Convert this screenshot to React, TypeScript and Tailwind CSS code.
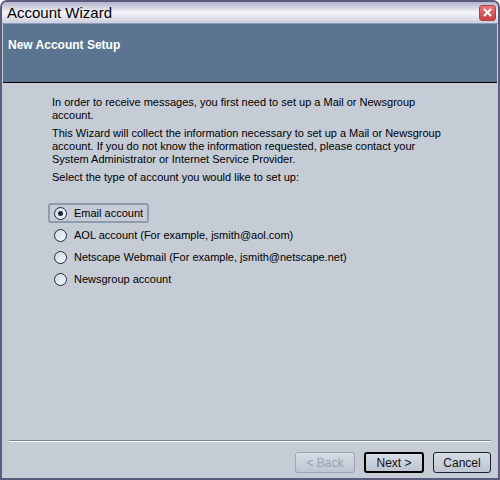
import React from "react";

const font = { fontFamily: '"Liberation Sans", Arial, sans-serif' };

function Radio({ checked }: { checked?: boolean }) {
  return (
    <span className="flex h-[13px] w-[13px] items-center justify-center rounded-full border border-[#1c2b3f] bg-gradient-to-br from-[#cfd8df] to-[#f4fbff]">
      {checked && <span className="h-[5px] w-[5px] rounded-full bg-[#1e2630]" />}
    </span>
  );
}

function Btn({ children, variant }: { children: React.ReactNode; variant?: "default" | "disabled" }) {
  const base =
    "flex h-[21px] items-center justify-center rounded-[3px] text-[12px] bg-gradient-to-b from-[#d7dde5] to-[#bcc5d1]";
  if (variant === "default")
    return <div className={`${base} w-[60px] border-2 border-black text-[#111]`}>{children}</div>;
  if (variant === "disabled")
    return <div className={`${base} w-[60px] border border-[#9aa5b5] text-[#98a2b0]`}>{children}</div>;
  return <div className={`${base} w-[58px] border border-[#1b2330] text-[#111]`}>{children}</div>;
}

export default function App() {
  return (
    <div style={font} className="flex h-[480px] w-[500px] flex-col overflow-hidden rounded-t-[7px] border-2 border-[#5c5c7e] bg-[#c5ccd6]">
      {/* title bar */}
      <div className="flex h-[21px] items-center justify-between bg-gradient-to-b from-[#b3b3cb] via-[#f4f4f8] to-[#cfcfdd] pl-[5px] pr-[2px]">
        <span className="text-[15px] leading-none text-black">Account Wizard</span>
        <span className="flex h-[16px] w-[17px] items-center justify-center rounded-[3px] border border-[#b04040] bg-gradient-to-b from-[#e87878] to-[#c64040]">
          <svg width="9" height="9" viewBox="0 0 9 9">
            <path d="M1 1 L8 8 M8 1 L1 8" stroke="#fff" strokeWidth="2" />
          </svg>
        </span>
      </div>
      <div className="h-[1px] bg-[#8a9cc0]" />
      <div className="mx-[1px] h-[59px] border-b border-black bg-[#5b7590] pl-[5px] pt-[8px]">
        <span className="text-[12px] font-bold text-white">New Account Setup</span>
      </div>
      {/* body */}
      <div className="flex flex-1 flex-col px-[1px]">
        <div className="pl-[49px] pt-[13px] text-[11px] leading-[13px] text-black">
          <p>
            In order to receive messages, you first need to set up a Mail or Newsgroup
            <br />
            account.
          </p>
          <p className="mt-[5px]">
            This Wizard will collect the information necessary to set up a Mail or Newsgroup
            <br />
            account. If you do not know the information requested, please contact your
            <br />
            System Administrator or Internet Service Provider.
          </p>
          <p className="mt-[5px]">Select the type of account you would like to set up:</p>
        </div>
        <div className="mt-[19px] flex flex-col gap-[2px] pl-[45px] text-[11px] text-black">
          <div className="flex h-[20px] w-[101px] items-center gap-[7px] rounded-[3px] border-2 border-[#8d9bad] pl-[4px]">
            <Radio checked />
            <span>Email account</span>
          </div>
          <div className="flex h-[20px] items-center gap-[7px] pl-[6px]">
            <Radio />
            <span>AOL account (For example, jsmith@aol.com)</span>
          </div>
          <div className="flex h-[20px] items-center gap-[7px] pl-[6px]">
            <Radio />
            <span>Netscape Webmail (For example, jsmith@netscape.net)</span>
          </div>
          <div className="flex h-[20px] items-center gap-[7px] pl-[6px]">
            <Radio />
            <span>Newsgroup account</span>
          </div>
        </div>
        <div className="flex-1" />
        <div className="mx-[6px] h-[2px] border-t border-[#7b8595] bg-white" />
        <div className="flex justify-end gap-[9px] pb-[5px] pr-[6px] pt-[10px]">
          <Btn variant="disabled">&lt; Back</Btn>
          <Btn variant="default">Next &gt;</Btn>
          <Btn>Cancel</Btn>
        </div>
      </div>
    </div>
  );
}
